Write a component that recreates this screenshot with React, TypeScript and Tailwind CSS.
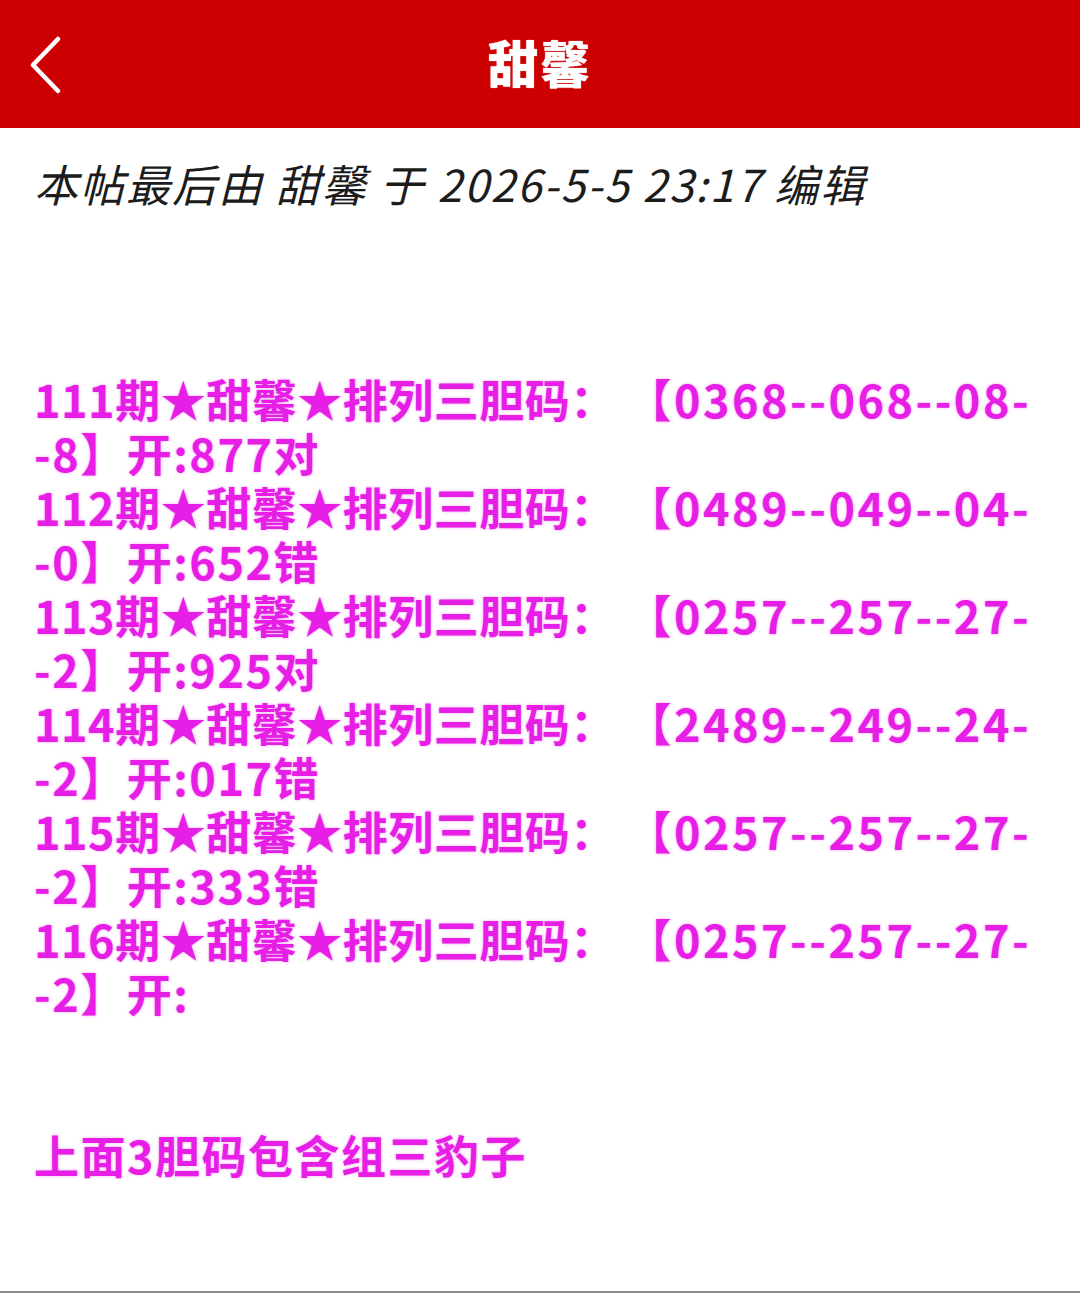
import React from "react";

const rows = [
  { n: "111", a: "0368--068--08-", b: "-8】开:877对" },
  { n: "112", a: "0489--049--04-", b: "-0】开:652错" },
  { n: "113", a: "0257--257--27-", b: "-2】开:925对" },
  { n: "114", a: "2489--249--24-", b: "-2】开:017错" },
  { n: "115", a: "0257--257--27-", b: "-2】开:333错" },
  { n: "116", a: "0257--257--27-", b: "-2】开:" },
];

export default function App() {
  const cjk = { fontFamily: '"Noto Sans CJK SC", "Noto Sans", sans-serif' };
  return (
    <div className="w-[1080px] h-[1293px] bg-white flex flex-col relative overflow-hidden" style={cjk}>
      <header className="h-[128px] bg-[#cc0000] flex items-center justify-center relative shrink-0">
        <svg className="absolute left-[28px] top-[36px]" width="34" height="58" viewBox="0 0 34 58">
          <path d="M30 3 L5 29 L30 55" fill="none" stroke="#fff" strokeWidth="4.5" strokeLinecap="round" strokeLinejoin="round" />
        </svg>
        <h1 className="text-white text-[50px] font-black leading-none tracking-[2px] mt-[-6px] [text-shadow:0_0_1px_#fff]">甜馨</h1>
      </header>
      <div className="px-[34px] pt-[28px]">
        <p className="text-[44px] leading-[54px] italic tracking-[2px] text-[#1c1c1c] whitespace-nowrap">
          本帖最后由 甜馨 于 2026-5-5 23:17 编辑
        </p>
        <div className="mt-[162px] text-[#e61ee6] font-bold text-[45px] leading-[54px] tracking-[1.5px] whitespace-nowrap [text-shadow:0_0_3px_rgba(240,80,240,0.5)]">
          {rows.map((r) => (
            <div key={r.n}>
              <div>
                <span className="tracking-[0.5px]">{r.n}期★甜馨★排列三胆码： </span>
                <span className="tracking-[2.5px]">【{r.a}</span>
              </div>
              <div>{r.b}</div>
            </div>
          ))}
          <div className="mt-[108px]">上面3胆码包含组三豹子</div>
        </div>
      </div>
      <div className="absolute bottom-0 left-0 w-full h-[2px] bg-[#8a8a8a]" />
    </div>
  );
}
